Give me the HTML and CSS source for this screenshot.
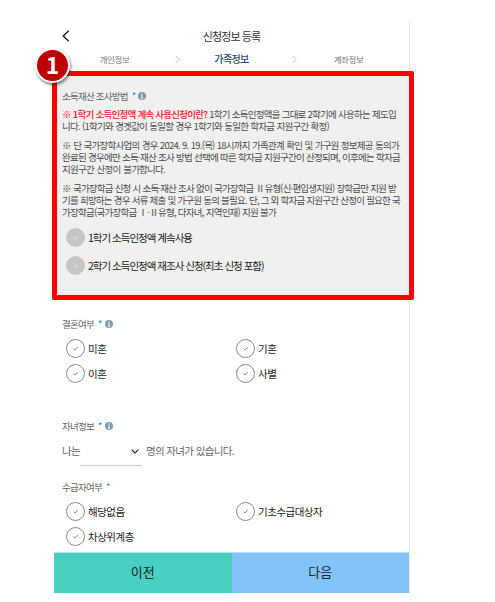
FILE: index.html
```html
<!DOCTYPE html>
<html lang="ko">
<head>
  <meta charset="UTF-8">
  <meta name="viewport" content="width=device-width, initial-scale=1.0">
  <title>신청정보 등록</title>
  <link rel="stylesheet" href="styles.css">
</head>
<body>
  <svg class="defs" width="0" height="0">
    <symbol id="check" viewBox="0 0 20 20"><path d="M7.5 10.2l1.9 1.6 3.3-3.6" fill="none" stroke="currentColor" stroke-width="1"/></symbol>
    <symbol id="arrow" viewBox="0 0 6 10"><path d="M1 1l4 4-4 4" fill="none" stroke="currentColor" stroke-width=".9"/></symbol>
    <symbol id="info" viewBox="0 0 8 8"><circle cx="4" cy="4" r="4" fill="#829ab1"/><path d="M4 1.3v1.2M3.2 3.4H4v2.8M3 6.3h2" fill="none" stroke="#fff" stroke-width=".9"/></symbol>
  </svg>

  <div class="app">
    <header class="header">
      <svg class="back" viewBox="0 0 8 12"><path d="M6.7 .8L1.3 6l5.4 5.2" fill="none" stroke="#222" stroke-width="1.5"/></svg>
      <h1>신청정보 등록</h1>
    </header>

    <nav class="steps">
      <span class="step">개인정보</span>
      <svg class="arrow"><use href="#arrow"/></svg>
      <span class="step active">가족정보</span>
      <svg class="arrow"><use href="#arrow"/></svg>
      <span class="step">계좌정보</span>
    </nav>

    <section class="method">
      <div class="frame"></div>
      <div class="badge">1</div>
      <h2>소득재산 조사방법 <b>*</b><svg class="info"><use href="#info"/></svg></h2>
      <p class="note">
        <span class="w334"><em>※ 1학기 소득인정액 계속 사용신청이란?</em> 1학기 소득인정액을 그대로 2학기에 사용하는 제도입</span>
        <span class="w267">니다. (1학기와 경곗값이 동일할 경우 1학기와 동일한 학자금 지원구간 확정)</span>
      </p>
      <p class="note">
        <span class="w337">※ 단 국가장학사업의 경우 2024. 9. 19.(목) 18시까지 가족관계 확인 및 가구원 정보제공 동의가</span>
        <span class="w338">완료된 경우에만 소득·재산 조사 방법 선택에 따른 학자금 지원구간이 산정되며, 이후에는 학자금</span>
        <span class="w103">지원구간 산정이 불가합니다.</span>
      </p>
      <p class="note">
        <span class="w334 tight">※ 국가장학금 신청 시 소득·재산 조사 없이 국가장학금 Ⅱ유형(신·편입생지원) 장학금만 지원 받</span>
        <span class="w338">기를 희망하는 경우 서류 제출 및 가구원 동의 불필요. 단, 그 외 학자금 지원구간 산정이 필요한 국</span>
        <span class="w214">가장학금(국가장학금 Ⅰ·Ⅱ유형, 다자녀, 지역인재) 지원 불가</span>
      </p>
      <div class="choices">
        <label class="option filled"><i><svg><use href="#check"/></svg></i>1학기 소득인정액 계속사용</label>
        <label class="option filled"><i><svg><use href="#check"/></svg></i>2학기 소득인정액 재조사 신청(최초 신청 포함)</label>
      </div>
    </section>

    <section class="marriage">
      <h2>결혼여부 <b>*</b><svg class="info"><use href="#info"/></svg></h2>
      <div class="grid">
        <label class="option"><i><svg><use href="#check"/></svg></i>미혼</label>
        <label class="option"><i><svg><use href="#check"/></svg></i>기혼</label>
        <label class="option"><i><svg><use href="#check"/></svg></i>이혼</label>
        <label class="option"><i><svg><use href="#check"/></svg></i>사별</label>
      </div>
    </section>

    <section class="children">
      <h2>자녀정보 <b>*</b><svg class="info"><use href="#info"/></svg></h2>
      <div class="count">
        <span>나는</span>
        <span class="select"><svg viewBox="0 0 8 5"><path d="M.6 .6L4 4 7.4 .6" fill="none" stroke="#222" stroke-width="1.1"/></svg></span>
        <span class="tail">명의 자녀가 있습니다.</span>
      </div>
    </section>

    <section class="benefit">
      <h2>수급자여부 <b>*</b></h2>
      <div class="grid">
        <label class="option"><i><svg><use href="#check"/></svg></i>해당없음</label>
        <label class="option"><i><svg><use href="#check"/></svg></i>기초수급대상자</label>
        <label class="option"><i><svg><use href="#check"/></svg></i>차상위계층</label>
      </div>
    </section>

    <footer class="actions">
      <button class="prev">이전</button>
      <button class="next">다음</button>
    </footer>
  </div>
</body>
</html>
```

FILE: styles.css
```css
* { box-sizing: border-box; }
body { margin: 0; padding-top: 20px; background: #fff; color: #444; font-family: "Noto Sans CJK KR", "Noto Sans", sans-serif; font-size: 10px; }
h1, h2, p { margin: 0; font-weight: 400; }
svg { display: block; flex: none; }
.defs { position: absolute; }

.app { width: 356px; height: 573px; margin-left: 54px; border-right: 1px solid #e8e8e8; display: flex; flex-direction: column; }

.header { height: 32px; display: grid; grid-template-columns: 23px 1fr 23px; align-items: center; }
.back { width: 8px; height: 12px; margin-left: 8px; }
h1 { font-size: 11px; letter-spacing: -.9px; text-align: center; color: #333; }

.steps { height: 21px; display: grid; grid-template-columns: 121px 5px 112px 5px 1fr; align-items: center; text-align: center; padding-bottom: 7px; line-height: 14px; }
.step { font-size: 8.5px; letter-spacing: -.4px; color: #777; }
.step.active { padding-right: 9px; font-size: 10px; letter-spacing: -.6px; font-weight: 500; color: #2d4674; }
.step:last-child { padding-right: 9px; }
.arrow { width: 5px; height: 9px; color: #aaa; }

.method { position: relative; height: 224px; padding: 15px 8px 0; background: #f0f0f0; }
.frame { position: absolute; left: -2px; top: -2px; width: 362px; height: 229px; border: 5px solid #f00; border-radius: 2px; }
.badge { position: absolute; left: -19px; top: -25px; width: 35px; height: 35px; border: 2px solid #fff; border-radius: 50%; background: #c00000; box-shadow: 1px 2px 3px rgba(0,0,0,.5); color: #fff; font: 700 23px/29px "Noto Sans CJK KR", sans-serif; text-align: center; }

h2 { display: flex; align-items: center; height: 15px; font-size: 9.5px; letter-spacing: -.75px; color: #666; white-space: pre; }
h2 b { margin-left: 2px; font-weight: 400; color: #1683d8; }
.info { width: 8px; height: 8px; margin-left: 3px; }

.note { margin-bottom: 7px; font-size: 9.5px; line-height: 12px; letter-spacing: -.75px; color: #4c4c4c; }
h2 + .note { margin-top: 5px; }
.note span { display: block; white-space: nowrap; text-align: justify; text-align-last: justify; }
.note em { font-style: normal; font-weight: 500; color: #f0141e; }
.note .tight { letter-spacing: -.83px; }
.w103 { width: 103px; }
.w214 { width: 214px; }
.w267 { width: 267px; }
.w334 { width: 334px; }
.w337 { width: 337px; }
.w338 { width: 338px; }

.option { display: flex; align-items: center; gap: 4px; height: 24px; font-size: 10.5px; letter-spacing: -.5px; color: #222; white-space: nowrap; }
.option i { width: 19px; height: 19px; border: 1px solid #888; border-radius: 50%; color: #777; }
.option svg { width: 17px; height: 17px; }
.filled i { background: #c6c6c6; border-color: #c6c6c6; color: #eee; }
.choices { padding: 0 0 0 4px; display: grid; gap: 4px; }
.choices .option { gap: 3px; letter-spacing: -1px; }

.marriage { height: 101px; padding: 19px 8px 0; }
.grid { display: grid; grid-template-columns: 170px 1fr; row-gap: 1px; padding: 5px 0 0 4px; }
.grid .option { gap: 3px; }

.children { height: 64px; padding: 20px 8px 0; }
.count { display: flex; height: 33px; line-height: 36px; font-size: 10.5px; letter-spacing: -.65px; color: #666; }
.select { width: 62px; border-bottom: 1px solid #ccc; display: flex; justify-content: flex-end; padding: 16px 3px 0 0; }
.select svg { width: 8px; height: 5px; }
.tail { margin-left: 4px; }

.benefit { padding: 17px 8px 0; }

.actions { margin-top: auto; display: flex; height: 41px; }
.actions button { flex: 1; border: 0; border-top: 1px solid #b5e6e2; padding: 0 0 3px; font: 400 13px "Noto Sans CJK KR", sans-serif; color: #222; }
.actions .prev { background: #48cfbf; }
.actions .next { background: #82c4f9; border-color: #b8dcfa; }
```
